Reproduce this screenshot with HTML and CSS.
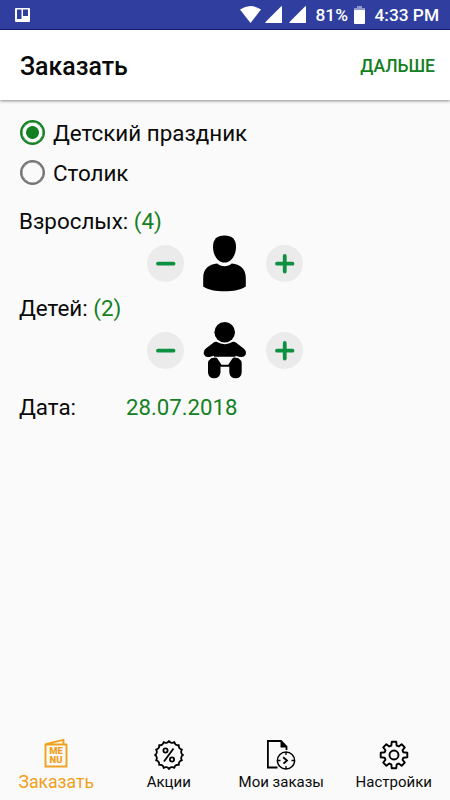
FILE: index.html
```html
<!DOCTYPE html>
<html lang="ru">
<head>
  <meta charset="UTF-8">
  <meta name="viewport" content="width=device-width, initial-scale=1.0">
  <title>Заказать</title>
  <link rel="stylesheet" href="styles.css">
</head>
<body>

  <div class="status-bar">
    <svg class="status-app" width="15" height="14" viewBox="0 0 15 14">
      <path fill="#fff" fill-rule="evenodd" d="M1 0h13a1 1 0 0 1 1 1v12a1 1 0 0 1-1 1H1a1 1 0 0 1-1-1V1a1 1 0 0 1 1-1zM2 1.500v9.500h4.500V1.500zM8 1.500v6.500H13V1.500z"/>
    </svg>
    <div class="status-icons">
      <svg width="66" height="17" viewBox="0 0 66 17" fill="#fff">
        <path d="M0 3.500Q10.500-3.500 21 3.500L10.500 17z"/>
        <path d="M42 0v17H26q-1 0-.5-1L41 0.500zM66 0v17H50q-1 0-.5-1L65 0.500z"/>
      </svg>
      <span class="status-percent">81%</span>
      <svg class="battery" width="11" height="18" viewBox="0 0 11 18">
        <path fill="#8f97cd" d="M3 0h5v2h3v3H0V2h3z"/>
        <path fill="#fff" d="M0 4h11v13q0 1-1 1H1q-1 0-1-1z"/>
      </svg>
      <span class="status-time">4:33 PM</span>
    </div>
  </div>

  <header>
    <h1>Заказать</h1>
    <a href="#" class="next-link">ДАЛЬШЕ</a>
  </header>

  <main>
    <div class="radio-row">
      <span class="radio radio-checked"></span>
      <span class="radio-label">Детский праздник</span>
    </div>
    <div class="radio-row">
      <span class="radio"></span>
      <span class="radio-label">Столик</span>
    </div>

    <div class="field-label adults-label">Взрослых: <span class="green">(4)</span></div>
    <div class="counter">
      <button class="round-btn">
        <svg width="37" height="37" viewBox="0 0 37 37"><path d="M11 18.700h15.500"/></svg>
      </button>
      <svg class="person" width="44" height="57" viewBox="0 0 44 57">
        <path d="M21.500 .5c7.500 0 11.500 3.800 11.500 11.200C33 20.500 28 27.600 21.500 27.600S10 20.500 10 11.700C10 4.300 14 .5 21.500 .5z"/>
        <path d="M14.200 28.500C16.500 30.200 18.500 31.200 21.500 31.200s5-1 7.300-2.700C37 29.500 42.800 33.500 42.800 43v8.500C37.500 55 30.500 56.200 21.500 56.200S5.500 55 .2 51.500V43c0-9.500 5.800-13.500 14-14.500z"/>
      </svg>
      <button class="round-btn">
        <svg width="37" height="37" viewBox="0 0 37 37"><path d="M11 18.700h15.500M18.750 11v15.500"/></svg>
      </button>
    </div>

    <div class="field-label kids-label">Детей: <span class="green">(2)</span></div>
    <div class="counter">
      <button class="round-btn">
        <svg width="37" height="37" viewBox="0 0 37 37"><path d="M11 18.700h15.500"/></svg>
      </button>
      <svg class="person" width="44" height="57" viewBox="0 0 44 57">
        <circle cx="21.700" cy="10.300" r="10.300"/>
        <path d="M13.500 19.800Q21.700 24.500 29.900 19.800Q31.500 19.500 33.500 21L41 26.800Q43.700 29.500 42.700 32.500Q41 35.700 37 34.900L32.500 33.800V34.700H11V33.800L6.500 34.900Q2.500 35.700 1 32.500Q0 29.500 2.500 26.800L10 21Q12 19.500 13.500 19.800z"/>
        <path d="M12 35.500Q13.700 35.500 14.500 36.800L18.500 42.800H25.200L29.200 36.800Q30 35.500 31.700 35.500L35.500 36.200Q38.700 38.500 38.700 41V50.500Q38.200 56.300 32.700 56.300Q27 56.300 26.300 50.500V44.800H17.500V50.500Q16.800 56.300 11 56.300Q5.500 56.300 5 50.500V41Q5 38.500 8.200 36.200z"/>
      </svg>
      <button class="round-btn">
        <svg width="37" height="37" viewBox="0 0 37 37"><path d="M11 18.700h15.500M18.750 11v15.500"/></svg>
      </button>
    </div>

    <div class="date-row">
      <span class="date-label">Дата:</span>
      <span class="date-value">28.07.2018</span>
    </div>
  </main>

  <nav>
    <a href="#" class="tab tab-order active">
      <svg width="30" height="30" viewBox="0 0 30 30">
        <path d="M4.500 4.500H25.500V26.500H4.500zM4.500 4.200L22.500 -.2V4.500" fill="none" stroke="#f0a01c" stroke-width="1.900" stroke-linejoin="round"/>
        <text class="menu-text"><tspan x="15" y="13.800">ME</tspan><tspan x="15" y="22.800">NU</tspan></text>
      </svg>
      <span>Заказать</span>
    </a>
    <a href="#" class="tab tab-sales">
      <svg width="30" height="30" viewBox="-15 -15 30 30" fill="none" stroke="#000" stroke-width="1.800" stroke-linejoin="round">
        <path d="M14 0A3.600 3.600 0 0 0 12.930 5.360A3.600 3.600 0 0 0 9.900 9.900A3.600 3.600 0 0 0 5.360 12.930A3.600 3.600 0 0 0 0 14A3.600 3.600 0 0 0-5.360 12.930A3.600 3.600 0 0 0-9.900 9.900A3.600 3.600 0 0 0-12.930 5.360A3.600 3.600 0 0 0-14 0A3.600 3.600 0 0 0-12.930-5.360A3.600 3.600 0 0 0-9.900-9.900A3.600 3.600 0 0 0-5.360-12.930A3.600 3.600 0 0 0 0-14A3.600 3.600 0 0 0 5.360-12.930A3.600 3.600 0 0 0 9.900-9.900A3.600 3.600 0 0 0 12.930-5.360A3.600 3.600 0 0 0 14 0z"/>
        <circle cx="-3.500" cy="-4.500" r="2.100"/>
        <circle cx="3" cy="4.500" r="2.100"/>
        <path d="M4.500-6.500L-5 6.500"/>
      </svg>
      <span>Акции</span>
    </a>
    <a href="#" class="tab tab-orders">
      <svg width="30" height="30" viewBox="0 0 30 30" fill="none" stroke="#000" stroke-width="1.800">
        <path d="M11.500 27.500H1.900V1H15L20.500 6.500V10"/>
        <path d="M14.500 .5V7.500H21z" fill="#000" stroke="none"/>
        <circle cx="20" cy="20.500" r="8.600" stroke-width="1.500"/>
        <path d="M20 12v3M20 26v3M11.500 20.500h3M25.500 20.500h3" stroke-width="1.300"/>
        <path d="M17.200 17.200L21 20.500L17.500 23.700"/>
      </svg>
      <span>Мои заказы</span>
    </a>
    <a href="#" class="tab tab-settings">
      <svg width="30" height="30" viewBox="-15 -15 30 30" fill="none" stroke="#000" stroke-width="1.900" stroke-linejoin="round">
        <path d="M-2.700-9.400L-2.200-13.300H2.200L2.700-9.400L4.740-8.550L7.640-10.750L10.750-7.640L8.550-4.740L9.400-2.700L13.300-2.200V2.200L9.400 2.700L8.550 4.740L10.750 7.640L7.640 10.750L4.740 8.550L2.700 9.400L2.200 13.300H-2.200L-2.700 9.400L-4.740 8.550L-7.640 10.750L-10.750 7.640L-8.550 4.740L-9.400 2.700L-13.300 2.200V-2.200L-9.400-2.700L-8.550-4.740L-10.750-7.640L-7.640-10.750L-4.740-8.550z"/>
        <circle r="4.500"/>
      </svg>
      <span>Настройки</span>
    </a>
  </nav>

</body>
</html>
```
FILE: styles.css
```css
* {
  box-sizing: border-box;
}

body {
  margin: 0;
  height: 800px;
  display: flex;
  flex-direction: column;
  background-color: #fafafa;
  color: #0a0a0a;
  font-family: Roboto, "Noto Sans", sans-serif;
  overflow: hidden;
}

a {
  text-decoration: none;
  color: inherit;
}

/* Status bar */
.status-bar {
  height: 30px;
  padding: 0 11px 0 15px;
  display: flex;
  align-items: center;
  justify-content: space-between;
  background-color: #303f9f;
  border-bottom: 1px solid #141d72;
  color: #fff;
}

.status-icons {
  display: flex;
  align-items: center;
  font-size: 17.300px;
  font-weight: 500;
}

.status-percent {
  margin-left: 10px;
  padding-top: 1px;
  width: 32px;
}

.battery {
  margin-left: 6px;
}

.status-time {
  margin-left: 10px;
  padding-top: 1px;
}

/* Header */
header {
  height: 70px;
  padding: 0 15px 0 20px;
  display: flex;
  align-items: center;
  justify-content: space-between;
  background-color: #fff;
  box-shadow: 0 1px 3px rgba(0, 0, 0, 0.45);
}

h1 {
  margin: 0;
  padding-top: 2px;
  font-size: 24.900px;
  font-weight: 500;
}

.next-link {
  padding-top: 1px;
  font-size: 17.500px;
  font-weight: 500;
  color: #138022;
}

main {
  flex: 1;
  padding: 12px 19px 0;
  font-size: 22.400px;
}

.radio-row {
  height: 40px;
  display: flex;
  align-items: center;
}

.radio {
  width: 25px;
  height: 25px;
  margin: 1px 8px 0 1px;
  border: 2px solid #757575;
  border-radius: 50%;
  box-shadow: inset 0 0 0 0.500px #757575;
}

.radio-label {
  padding-top: 2px;
}

.radio-checked {
  border-color: #138022;
  box-shadow: inset 0 0 0 0.500px #138022;
  background: radial-gradient(circle, #138022 6px, transparent 6.800px);
}

.field-label {
  height: 28px;
  line-height: 28px;
}

.adults-label {
  margin-top: 15px;
}

.kids-label {
  margin-top: 2px;
}

.green,
.date-value {
  color: #138022;
}

.counter {
  height: 57px;
  display: flex;
  align-items: center;
  justify-content: center;
}

.round-btn {
  width: 37px;
  height: 37px;
  padding: 0;
  border: none;
  border-radius: 50%;
  background-color: #ebebeb;
}

.round-btn svg {
  display: block;
  fill: none;
  stroke: #0d9040;
  stroke-width: 3.800;
  stroke-linecap: round;
}

.person {
  margin: 0 19px;
}

.date-row {
  display: flex;
  margin-top: 14px;
  line-height: 28px;
}

.date-label {
  width: 107px;
}

.date-value {
  font-size: 22.200px;
}

/* Bottom tabs */
nav {
  height: 70px;
  display: flex;
}

.tab {
  width: 112.500px;
  padding-top: 10px;
  display: flex;
  flex-direction: column;
  align-items: center;
  font-size: 15px;
  line-height: 24px;
  white-space: nowrap;
}

.tab svg {
  overflow: visible;
}

.tab.active {
  color: #f0a01c;
  font-size: 17.600px;
}

.menu-text {
  fill: #f0a01c;
  font-size: 9.500px;
  font-weight: 900;
  text-anchor: middle;
}
```
